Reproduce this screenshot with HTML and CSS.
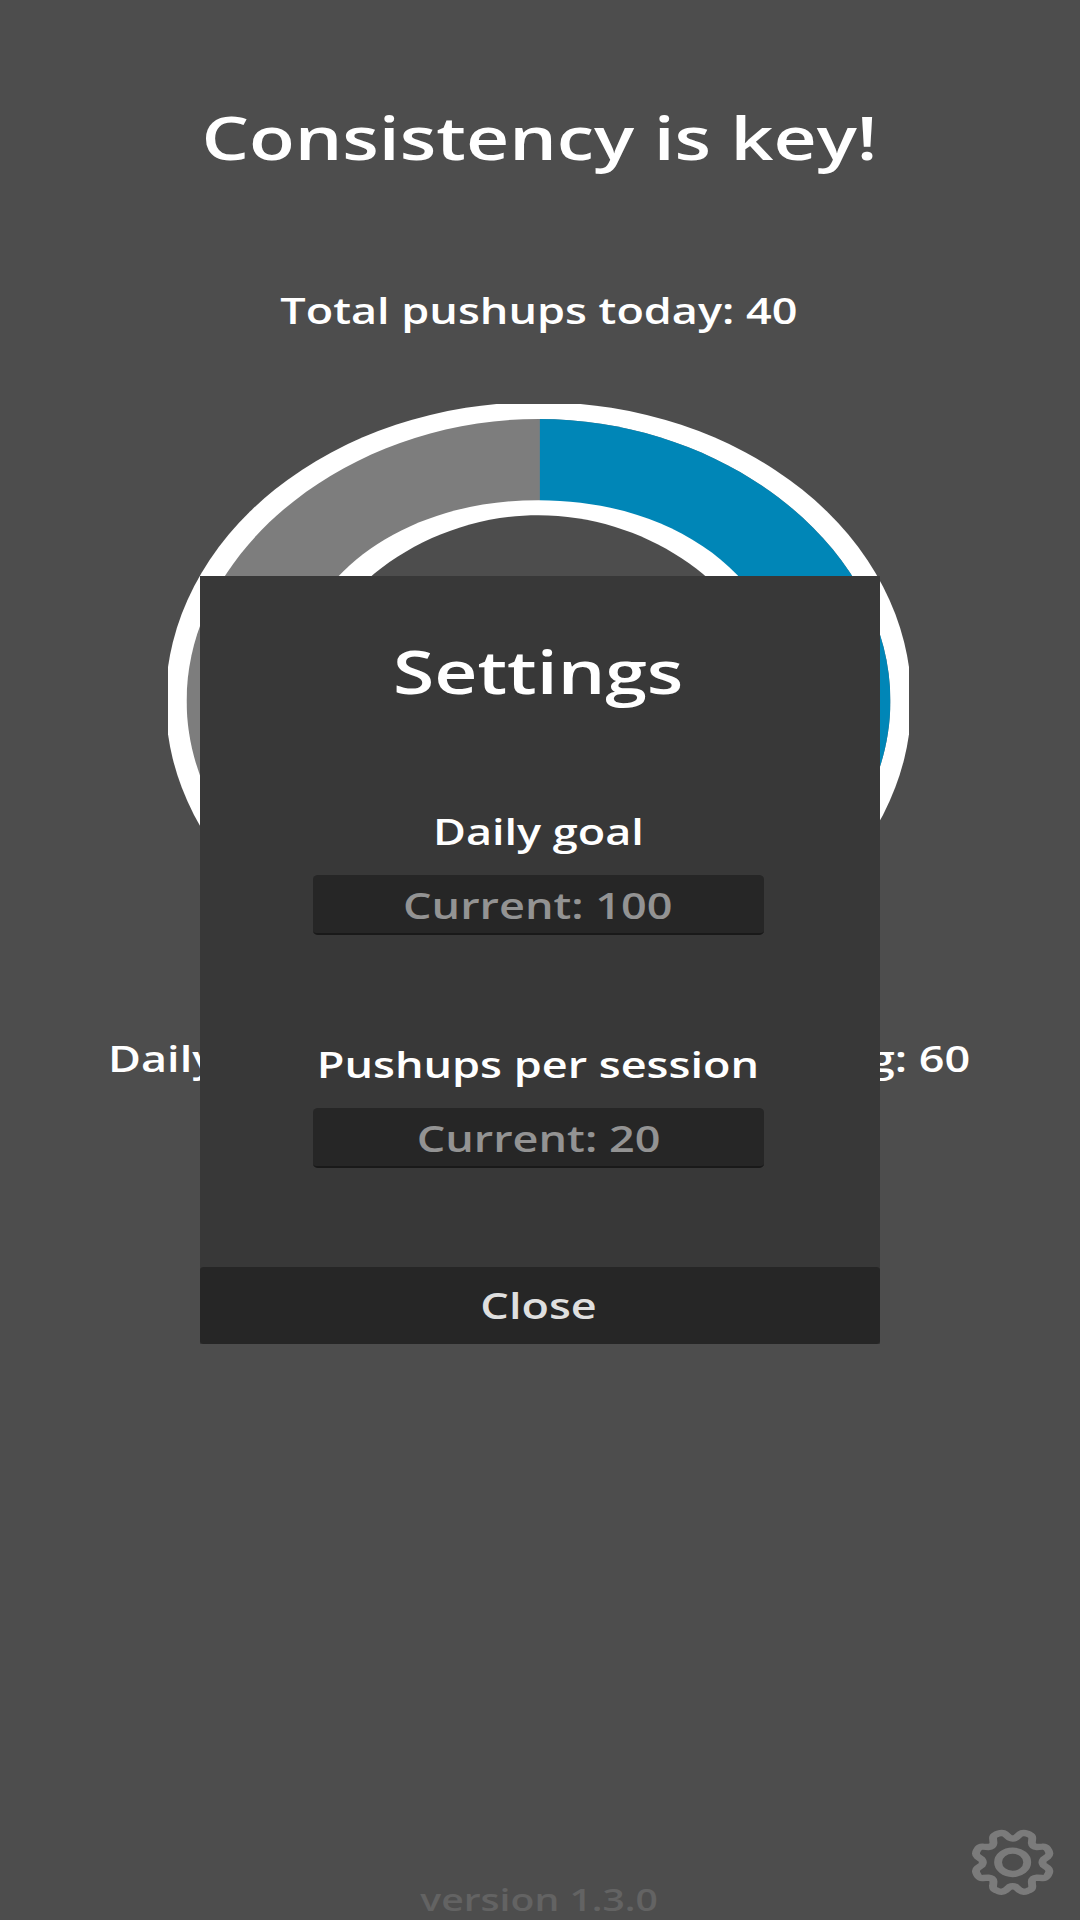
FILE: index.html
```html
<!DOCTYPE html>
<html lang="en">
<head>
<meta charset="utf-8">
<title>Pushup counter</title>
<link rel="stylesheet" href="styles.css">
</head>
<body>
<main class="screen">
  <h1 class="title wide">Consistency is key!</h1>
  <p class="total label wide">Total pushups today: 40</p>
  <svg class="ring" viewBox="-296.7 -296.7 593.4 593.4" preserveAspectRatio="none">
    <defs>
      <clipPath id="track"><path d="M0-281.8C151.7-281.8 281.8-151.7 281.8 0S151.7 281.8 0 281.8-281.8 151.7-281.8 0-151.7-281.8 0-281.8Z"/></clipPath>
    </defs>
    <circle class="ring-edge" r="298.6"/>
    <g clip-path="url(#track)">
      <circle class="ring-track" r="290"/>
      <circle class="ring-progress" r="241" pathLength="100" stroke-dasharray="40 100" transform="translate(1.1) rotate(-90)"/>
    </g>
    <path class="ring-edge" d="M0-200.5C115.4-200.5 200.5-115.4 200.5 0S115.4 200.5 0 200.5-200.5 115.4-200.5 0-115.4-200.5 0-200.5Z"/>
    <path class="ring-hole" d="M0-185.5C97.3-185.5 185.5-97.3 185.5 0S97.3 185.5 0 185.5-185.5 97.3-185.5 0-97.3-185.5 0-185.5Z"/>
  </svg>
  <div class="stats label">
    <span class="stat-left">Daily</span>
    <span class="stat-right">ing: 60</span>
  </div>
  <footer class="footer">
    <p class="version wide">version 1.3.0</p>
  </footer>
  <svg class="gear" viewBox="-100 -100 200 200" preserveAspectRatio="none">
    <path d="M-8-74Q0-69 8-74L17-84Q24-91 35-86L41-83Q48-79 47-71L46-58Q47-47 58-46L71-47Q79-48 83-41L86-35Q91-24 84-17L74-8Q69 0 74 8L84 17Q91 24 86 35L83 41Q79 48 71 47L58 46Q47 47 46 58L47 71Q48 79 41 83L35 86Q24 91 17 84L8 74Q0 69-8 74L-17 84Q-24 91-35 86L-41 83Q-48 79-47 71L-46 58Q-47 47-58 46L-71 47Q-79 48-83 41L-86 35Q-91 24-84 17L-74 8Q-69 0-74-8L-84-17Q-91-24-86-35L-83-41Q-79-48-71-47L-58-46Q-47-47-46-58L-47-71Q-48-79-41-83L-35-86Q-24-91-17-84Z"/>
    <circle r="35"/>
  </svg>
  <section class="panel">
    <h2 class="panel-title wide">Settings</h2>
    <div class="field">
      <p class="label wide">Daily goal</p>
      <div class="input label"><span class="wide">Current: 100</span></div>
    </div>
    <div class="field">
      <p class="label wide">Pushups per session</p>
      <div class="input label"><span class="wide">Current: 20</span></div>
    </div>
    <div class="close label"><span class="wide">Close</span></div>
  </section>
</main>
</body>
</html>
```

FILE: styles.css
```css
* { box-sizing: border-box; margin: 0; padding: 0; }
body { background: #4d4d4d; }
.screen {
  position: relative;
  width: 1080px;
  height: 1920px;
  padding: 97px 2px 0 0;
  overflow: hidden;
  display: flex;
  flex-direction: column;
  align-items: center;
  background: #4d4d4d;
  color: #fff;
  font-family: "Open Sans", "Noto Sans", sans-serif;
  font-weight: 600;
  white-space: nowrap;
}
.wide { display: block; transform: scaleX(1.25); }
.title, .panel-title { font-size: 60px; line-height: 80px; font-weight: 600; }
.label { font-size: 36px; line-height: 48px; }
.total { margin-top: 110px; }
.ring {
  width: 741px;
  height: 593.4px;
  margin: 69px 1px 0 0;
}
.ring-edge { fill: #fff; }
.ring-track { fill: #7d7d7d; }
.ring-hole { fill: #4d4d4d; }
.ring-progress { fill: none; stroke: #0086b7; stroke-width: 100; }
.stats {
  width: 863px;
  margin-top: 37.6px;
  display: flex;
  justify-content: space-between;
}
.stat-left { transform: scaleX(1.25); transform-origin: left; }
.stat-right { transform: scaleX(1.25); transform-origin: right; }
.footer { margin-top: auto; margin-bottom: -1px; }
.version { color: #636363; font-size: 31.3px; line-height: 44px; }
.gear {
  position: absolute;
  left: 970.7px;
  top: 1829px;
  width: 83.3px;
  height: 66.7px;
  fill: none;
  stroke: #7b7b7b;
  stroke-width: 19;
  stroke-linejoin: round;
}
.panel {
  position: absolute;
  left: 199.5px;
  top: 576px;
  width: 680.5px;
  height: 768px;
  padding-top: 55px;
  display: flex;
  flex-direction: column;
  align-items: center;
  background: #383838;
}
.panel-title, .field { margin-right: 3px; }
.field {
  display: flex;
  flex-direction: column;
  align-items: center;
  gap: 19px;
  margin-top: 97px;
}
.field + .field { margin-top: 105.5px; }
.input {
  width: 450.5px;
  height: 60px;
  padding-top: 7px;
  display: flex;
  justify-content: center;
  background: #262626;
  border-bottom: 2.5px solid #191919;
  border-radius: 5px / 4px;
  color: #939393;
}
.close {
  width: 100%;
  height: 77px;
  margin-top: auto;
  padding: 15px 3px 0 0;
  display: flex;
  justify-content: center;
  background: #262626;
  border-radius: 4px / 3px;
  color: #dfdfdf;
}
```
